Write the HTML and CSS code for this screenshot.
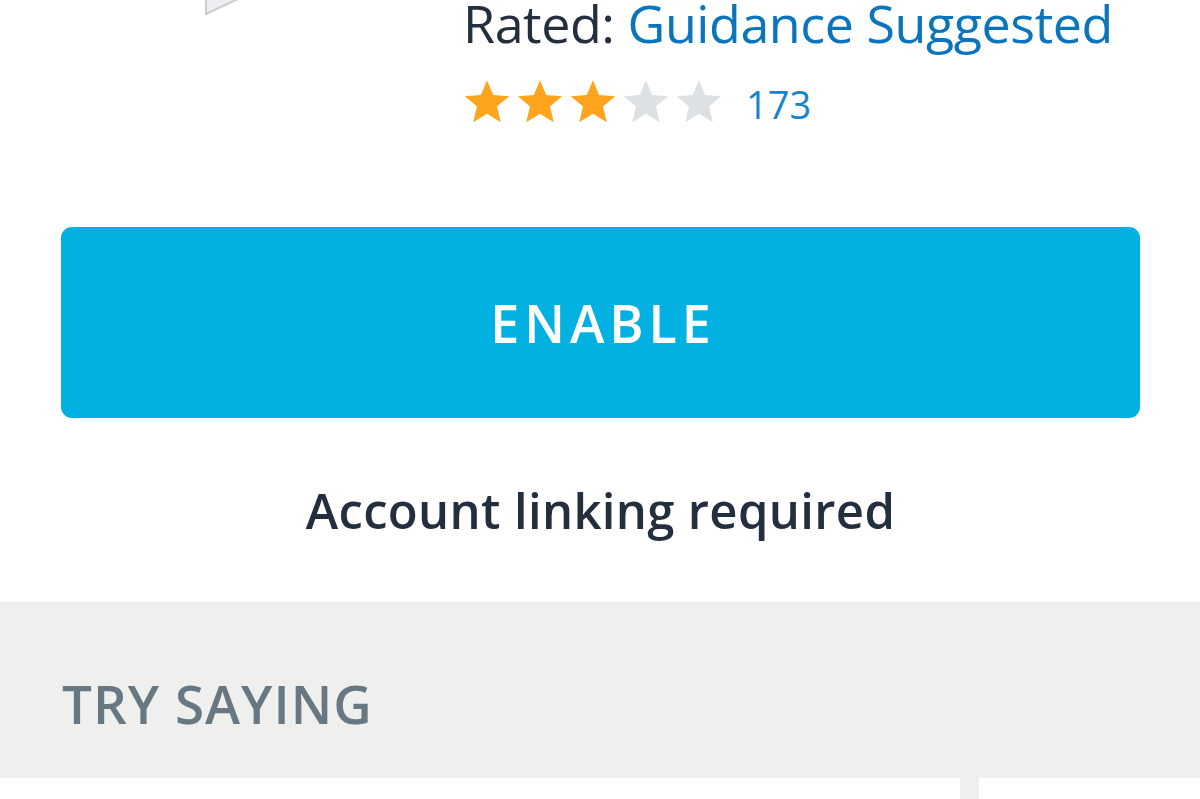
FILE: index.html
```html
<!DOCTYPE html>
<html lang="en">
<head>
  <meta charset="UTF-8">
  <title>Skill details</title>
  <meta name="viewport" content="width=device-width, initial-scale=1.0">
  <link rel="stylesheet" href="styles.css">
</head>
<body>
  <section class="summary">
    <div class="skill-icon">
      <svg width="60" height="16" viewBox="0 0 60 16" fill="none">
        <path d="M6 14L40 -2H6Z" fill="#eceef0" stroke="#c9cdd1" stroke-width="2"/>
      </svg>
    </div>
    <div class="skill-meta">
      <p class="rated">Rated: <a href="#" class="link">Guidance Suggested</a></p>
      <div class="rating">
        <span class="stars">
          <svg class="star on" viewBox="0 0 24 23"><path d="M12 0.6l3.1 7.4 8 0.6-6.1 5.2 1.9 7.8L12 17.4 5.1 21.6 7 13.8 0.9 8.6l8-0.6z"/></svg>
          <svg class="star on" viewBox="0 0 24 23"><path d="M12 0.6l3.1 7.4 8 0.6-6.1 5.2 1.9 7.8L12 17.4 5.1 21.6 7 13.8 0.9 8.6l8-0.6z"/></svg>
          <svg class="star on" viewBox="0 0 24 23"><path d="M12 0.6l3.1 7.4 8 0.6-6.1 5.2 1.9 7.8L12 17.4 5.1 21.6 7 13.8 0.9 8.6l8-0.6z"/></svg>
          <svg class="star" viewBox="0 0 24 23"><path d="M12 0.6l3.1 7.4 8 0.6-6.1 5.2 1.9 7.8L12 17.4 5.1 21.6 7 13.8 0.9 8.6l8-0.6z"/></svg>
          <svg class="star" viewBox="0 0 24 23"><path d="M12 0.6l3.1 7.4 8 0.6-6.1 5.2 1.9 7.8L12 17.4 5.1 21.6 7 13.8 0.9 8.6l8-0.6z"/></svg>
        </span>
        <a href="#" class="count">173</a>
      </div>
    </div>
  </section>

  <section class="actions">
    <button class="enable-btn">ENABLE</button>
    <p class="note">Account linking required</p>
  </section>

  <section class="try-saying">
    <h2>TRY SAYING</h2>
  </section>
  <div class="phrases">
    <div class="phrase"></div>
    <div class="phrase"></div>
  </div>
</body>
</html>
```

FILE: styles.css
```css
body { margin: 0; padding: 0; background: #fff; color: #232f3e; font-family: 'Open Sans', 'Noto Sans', Arial, sans-serif; overflow: hidden; }
.summary { display: flex; height: 140px; }
.skill-icon { width: 463px; padding-left: 200px; box-sizing: border-box; line-height: 0; }
.skill-meta { flex: 1; }
.rated { margin: 0; font-size: 52px; line-height: 46px; letter-spacing: -0.45px; white-space: nowrap; }
.link { color: #0a74bd; text-decoration: none; }
.rating { display: flex; align-items: flex-start; margin-top: 33px; gap: 23px; }
.stars { display: flex; gap: 5px; }
.star { width: 48px; height: 46px; fill: #dde1e4; }
.star.on { fill: #ffa41c; }
.count { font-size: 38px; color: #1a84c9; text-decoration: none; line-height: 46px; margin-top: 2px; }
.actions { padding: 87px 60px 0 61px; text-align: center; }
.enable-btn { display: block; width: 100%; height: 191px; border: none; border-radius: 11px; background: #00b1e1; color: #fff; font-family: inherit; font-size: 52px; font-weight: 600; letter-spacing: 5px; text-indent: 5px; cursor: pointer; }
.note { margin: 0; padding: 66px 0 66px; font-size: 49px; line-height: 52px; font-weight: 600; letter-spacing: 0.35px; }
.try-saying { background: #efefee; height: 176px; padding: 0 62px; box-sizing: border-box; display: flex; align-items: flex-end; }
.try-saying h2 { margin: 0 0 44px; font-size: 53px; font-weight: 600; color: #687883; line-height: 60px; letter-spacing: 1px; }
.phrases { display: flex; gap: 19px; background: #efefee; height: 40px; }
.phrase { background: #fff; flex: 0 0 960px; }
.phrase + .phrase { flex: 1; }
```
